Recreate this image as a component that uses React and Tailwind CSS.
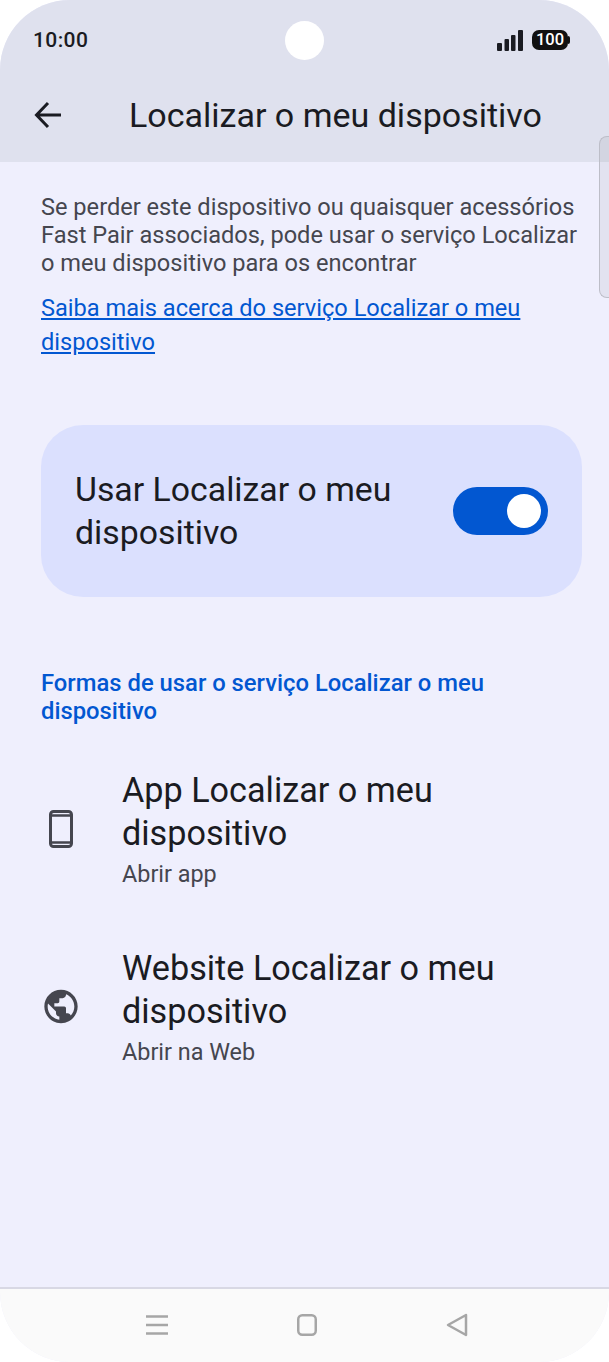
import React from "react";

const Toggle = () => (
  <div className="flex h-12 w-[95px] shrink-0 items-center justify-end rounded-full bg-[#0257d1] pr-[7px]">
    <div className="size-[34px] rounded-full bg-white"></div>
  </div>
);

const PhoneIcon = () => (
  <svg width="24" height="38" viewBox="0 0 24 38" fill="none" stroke="#45464f" strokeWidth="3">
    <rect x="1.5" y="1.5" width="21" height="35" rx="3" />
    <path d="M2 5.5h20M2 32.5h20" strokeWidth="2.5" />
  </svg>
);

const GlobeIcon = () => (
  <svg width="41" height="41" viewBox="0 0 24 24" fill="#45464f">
    <path d="M12 2C6.48 2 2 6.48 2 12s4.48 10 10 10 10-4.48 10-10S17.52 2 12 2zm-1 17.93c-3.95-.49-7-3.85-7-7.93 0-.62.08-1.21.21-1.79L9 15v1c0 1.1.9 2 2 2v1.93zm6.9-2.54c-.26-.81-1-1.39-1.9-1.39h-1v-3c0-.55-.45-1-1-1H8v-2h2c.55 0 1-.45 1-1V7h2c1.1 0 2-.9 2-2v-.41c2.93 1.19 5 4.06 5 7.41 0 2.08-.8 3.97-2.1 5.39z" />
  </svg>
);

const rows = [
  { title: "App Localizar o meu dispositivo", sub: "Abrir app", icon: <PhoneIcon /> },
  { title: "Website Localizar o meu dispositivo", sub: "Abrir na Web", icon: <GlobeIcon /> },
];

export default function App() {
  return (
    <div className="h-[1362px] w-[609px] overflow-hidden bg-white font-['Roboto',sans-serif]">
      <div className="relative flex h-full flex-col overflow-hidden rounded-[70px] bg-[#efeffd]">
        {/* Status bar and title */}
        <header className="h-[162px] shrink-0 bg-[#dfe1ee] text-[#1a1b22]">
          <div className="flex h-[80px] items-center justify-between pl-[33px] pr-[39px]">
            <span className="text-[21px] font-medium leading-none tracking-[0.4px]">10:00</span>
            <div className="flex items-center gap-[9px]">
              <svg width="26" height="21" viewBox="0 0 26 21" fill="#1a1b22">
                <rect x="0" y="13" width="5" height="8" rx="1" />
                <rect x="7.5" y="9" width="4.5" height="12" rx="1" />
                <rect x="14" y="5" width="4.5" height="16" rx="1" />
                <rect x="21" y="0" width="5" height="21" rx="1" />
              </svg>
              <div className="flex items-center">
                <div className="flex h-[20px] w-[36px] items-center justify-center rounded-[7px] bg-[#111] text-[16.5px] font-medium leading-none text-white">
                  100
                </div>
                <div className="h-[8px] w-[2px] rounded-r-sm bg-[#111]"></div>
              </div>
            </div>
          </div>
          <div className="flex h-[70px] items-center pl-[34px]">
            <svg width="27" height="28" viewBox="0 0 27 28" fill="none" stroke="#1a1b22" strokeWidth="3">
              <path d="M27 14H3M14 2 2.5 14 14 26" />
            </svg>
            <h1 className="ml-[68px] text-[34px] font-normal leading-none">Localizar o meu dispositivo</h1>
          </div>
        </header>

        {/* Camera cutout */}
        <div className="absolute left-[285px] top-[21px] h-[39px] w-[39px] rounded-full bg-white"></div>

        {/* Scroll indicator */}
        <div className="absolute right-0 top-[136px] h-[162px] w-[10px] rounded-l-[8px] border border-r-0 border-[#bdbec8] bg-black/5"></div>

        <main className="flex-1 pl-[41px] pt-[31px]">
          <p className="w-[540px] text-[23.6px] leading-[28px] text-[#45464f]">
            Se perder este dispositivo ou quaisquer acessórios Fast Pair associados, pode usar o serviço Localizar o meu dispositivo para os encontrar
          </p>
          <a href="#" className="mt-[14px] block w-[500px] text-[23.6px] leading-[34px] text-[#0257d1] underline">
            Saiba mais acerca do serviço Localizar o meu dispositivo
          </a>

          <section className="mt-[66px] flex h-[172px] w-[541px] items-center justify-between rounded-[42px] bg-[#dbe0fe] px-[34px]">
            <span className="w-[340px] text-[33.8px] leading-[43px] text-[#1a1b22]">Usar Localizar o meu dispositivo</span>
            <Toggle />
          </section>

          <h2 className="mt-[72px] w-[500px] text-[23.8px] font-medium leading-[28px] text-[#0257d1]">
            Formas de usar o serviço Localizar o meu dispositivo
          </h2>

          <ul className="mt-[44px] flex flex-col gap-[59px]">
            {rows.map((row) => (
              <li key={row.sub} className="flex items-center">
                <div className="flex w-[40px] justify-center">{row.icon}</div>
                <div className="ml-[41px]">
                  <p className="w-[400px] text-[34.2px] leading-[43px] text-[#1a1b22]">{row.title}</p>
                  <p className="mt-[5px] text-[23.4px] leading-[28px] text-[#45464f]">{row.sub}</p>
                </div>
              </li>
            ))}
          </ul>
        </main>

        {/* Navigation bar */}
        <nav className="flex h-[75px] shrink-0 items-center justify-center gap-[129px] border-t-2 border-[#d8d8e4] bg-[#fafafa] pb-[1px] pl-[4px]">
          <svg width="22" height="20" viewBox="0 0 22 20" stroke="#a6a6a6" strokeWidth="2.5">
            <path d="M0 1.5h22M0 10h22M0 18.5h22" />
          </svg>
          <svg width="20" height="22" viewBox="0 0 20 22" fill="none" stroke="#a6a6a6" strokeWidth="2.5">
            <rect x="1.25" y="1.25" width="17.5" height="19.5" rx="4" />
          </svg>
          <svg width="22" height="24" viewBox="0 0 22 24" fill="none" stroke="#a6a6a6" strokeWidth="2.5" strokeLinejoin="round">
            <path d="M20 2 2 12l18 10z" />
          </svg>
        </nav>
      </div>
    </div>
  );
}
